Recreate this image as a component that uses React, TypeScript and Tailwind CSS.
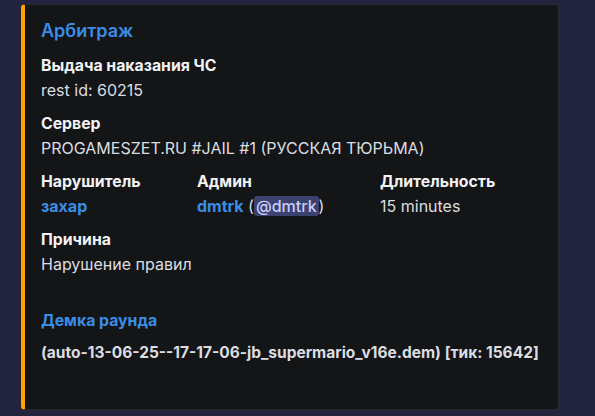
const Field = ({ name, children }: { name: string; children: React.ReactNode }) => (
  <div>
    <div className="text-[15.8px] leading-[22px] font-bold text-[#f2f3f5]">{name}</div>
    <div className="mt-[2px] text-[16px] leading-[22px] text-[#dbdee1]">{children}</div>
  </div>
);

export default function App() {
  return (
    <div
      className="w-[595px] h-[416px] bg-[#22233d] pl-[21px] pt-[4px]"
      style={{ fontFamily: "Inter, 'Noto Sans', sans-serif" }}
    >
      <div className="w-[538px] h-[406px] bg-[#141517] border border-[#2a2b30] border-l-4 border-l-[#ffa500] rounded-[4px] pl-[16px] pr-4 pt-[14px]">
        <div className="text-[18px] leading-[24px] font-semibold text-[#3a8de6]">Арбитраж</div>

        <div className="mt-[12px] flex flex-col gap-[12px]">
          <Field name="Выдача наказания ЧС">rest id: 60215</Field>
          <Field name="Сервер">PROGAMESZET.RU #JAIL #1 (РУССКАЯ ТЮРЬМА)</Field>
          <div className="grid grid-cols-[156px_183px_1fr]">
            <Field name="Нарушитель">
              <span className="font-bold text-[#3a8de6]">захар</span>
            </Field>
            <Field name="Админ">
              <span className="font-bold text-[#3a8de6]">dmtrk</span> (
              <span className="bg-[#3c4270] text-[#c9cdfb] font-medium rounded-[3px] px-[2px]">@dmtrk</span>)
            </Field>
            <Field name="Длительность">15 minutes</Field>
          </div>
          <Field name="Причина">Нарушение правил</Field>
        </div>

        <div className="mt-[35px] text-[15.8px] leading-[22px] font-bold text-[#3a8de6]">Демка раунда</div>
        <div className="mt-[10px] text-[15.5px] leading-[22px] font-bold text-[#dbdee1]">
          (auto-13-06-25--17-17-06-jb_supermario_v16e.dem) [тик: 15642]
        </div>
      </div>
    </div>
  );
}
